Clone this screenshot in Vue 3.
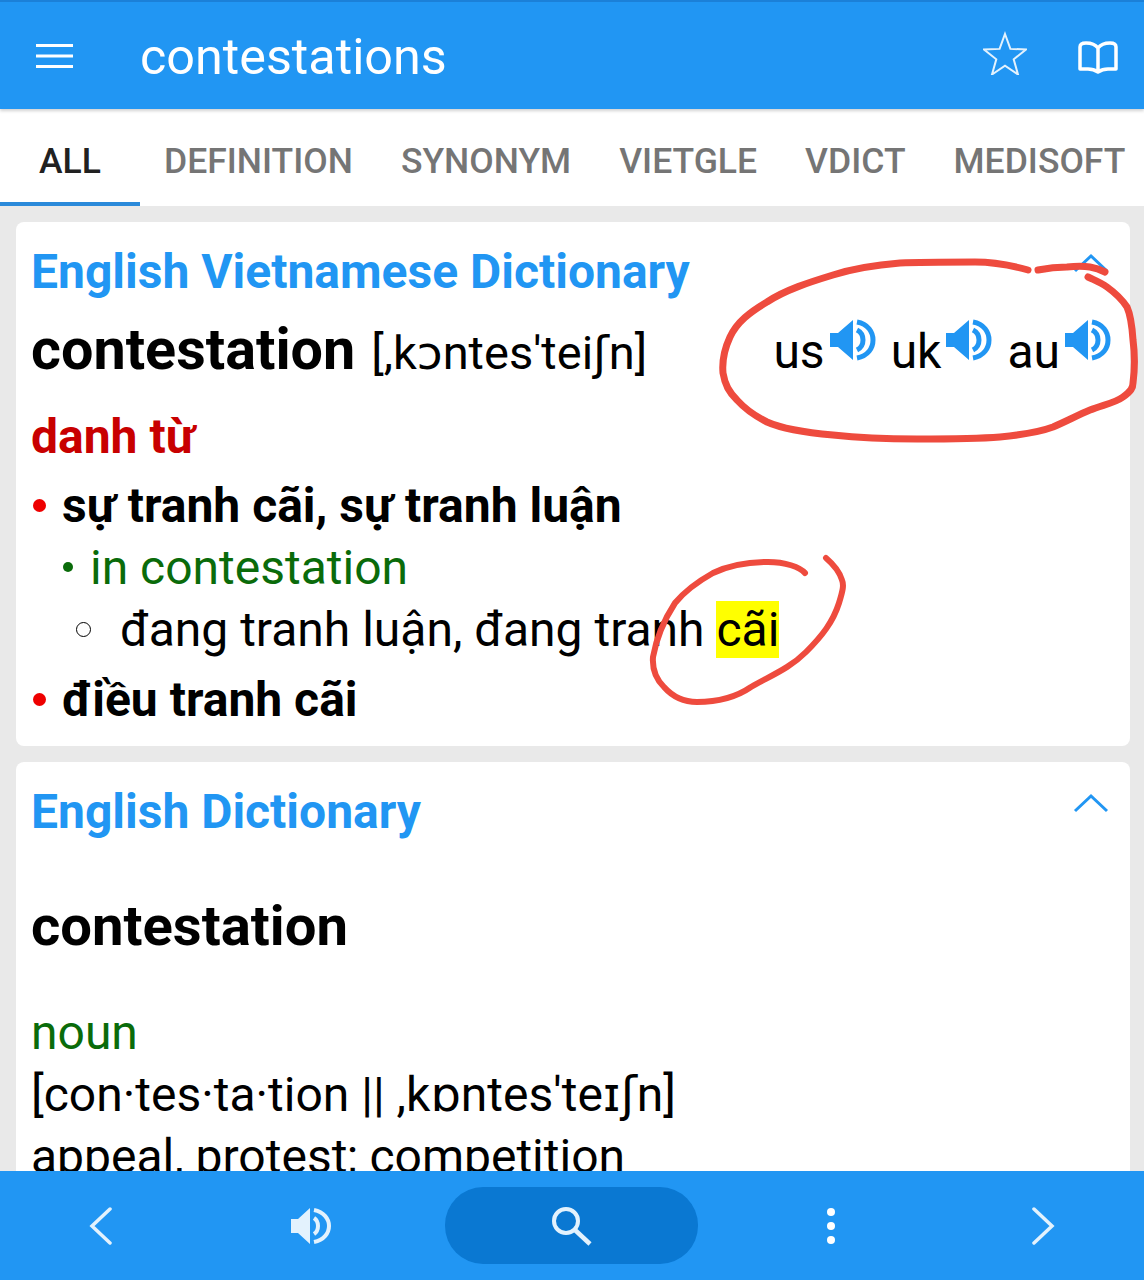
<script setup>
const tabs = ['ALL', 'DEFINITION', 'SYNONYM', 'VIETGLE', 'VDICT', 'MEDISOFT']
const accents = ['us', 'uk', 'au']
</script>

<template>
  <div class="screen">
    <header class="topbar">
      <svg class="menu-icon" width="38" height="26" viewBox="0 0 38 26">
        <path d="M0 2.500H37M0 13H37M0 23.500H37" fill="none" stroke="#fff" stroke-width="3" />
      </svg>
      <div class="query">contestations</div>
      <svg class="star-icon" width="44" height="44" viewBox="0 0 44 44">
        <path d="M22 3l5.400 14.900 15.600.6-12.300 9.800 4.300 15.200L22 34.700 9 43.500l4.300-15.200L1 18.500l15.600-.6z" fill="none" stroke="#e3f2fd" stroke-width="2" />
      </svg>
      <svg class="book-icon" width="40" height="34" viewBox="0 0 40 34">
        <path d="M20 7C17 3 13 2 8 2 4 2 2 3 2 6V28H10C14 28 17 29 20 31 23 29 26 28 30 28H38V6C38 3 36 2 32 2 27 2 23 3 20 7ZM20 7V31" fill="none" stroke="#fff" stroke-width="3.500" stroke-linejoin="round" />
      </svg>
    </header>

    <nav class="tabs">
      <div v-for="(tab, i) in tabs" :key="tab" class="tab" :class="{ active: i === 0 }">{{ tab }}</div>
    </nav>

    <main class="content">
      <section class="card first">
        <div class="card-head">
          <h2>English Vietnamese Dictionary</h2>
          <svg class="fold" width="36" height="20" viewBox="0 0 36 20">
            <path d="M2 18L18 3l16 15" fill="none" stroke="#2196f3" stroke-width="3" />
          </svg>
        </div>
        <div class="word-row">
          <div class="word-left">
            <span class="word">contestation</span>
            <span class="phon">[,kɔntes'teiʃn]</span>
          </div>
          <div class="accents">
            <span v-for="a in accents" :key="a" class="accent">
              {{ a }}
              <svg width="46" height="42" viewBox="0 0 46 42">
                <path d="M0 14H8L23 1V41L8 28H0Z" fill="#2196f3" />
                <path d="M27 11C31 13 33 17 33 21S31 29 27 31M27 3C38 5 43 13 43 21S38 37 27 39" fill="none" stroke="#2196f3" stroke-width="5" />
              </svg>
            </span>
          </div>
        </div>
        <div class="pos">danh từ</div>
        <div class="line bold"><i class="dot red"></i>sự tranh cãi, sự tranh luận</div>
        <div class="line example"><i class="dot green"></i>in contestation</div>
        <div class="line meaning"><i class="ring"></i>đang tranh luận, đang tranh <mark>cãi</mark></div>
        <div class="line bold"><i class="dot red"></i>điều tranh cãi</div>
      </section>

      <section class="card second">
        <div class="card-head">
          <h2>English Dictionary</h2>
          <svg class="fold" width="36" height="20" viewBox="0 0 36 20">
            <path d="M2 18L18 3l16 15" fill="none" stroke="#2196f3" stroke-width="3" />
          </svg>
        </div>
        <div class="word big">contestation</div>
        <div class="line noun">noun</div>
        <div class="line">[con·tes·ta·tion || ,kɒntes'teɪʃn]</div>
        <div class="line">appeal, protest; competition</div>
      </section>
    </main>

    <footer class="bottombar">
      <div class="cell">
        <svg width="24" height="38" viewBox="0 0 24 38">
          <path d="M21 2L3 19l18 17" fill="none" stroke="#e3f2fd" stroke-width="3.500" stroke-linecap="round" />
        </svg>
      </div>
      <div class="cell">
        <svg width="42" height="38" viewBox="0 0 42 38">
          <path d="M0 12H7L19 1V37L7 26H0Z" fill="#e3f2fd" />
          <path d="M23 11C26 13 27 16 27 19S26 25 23 27M23 3C33 5 38 12 38 19S33 33 23 35" fill="none" stroke="#e3f2fd" stroke-width="4" />
        </svg>
      </div>
      <div class="pill">
        <svg width="42" height="40" viewBox="0 0 42 40">
          <circle cx="15" cy="15" r="12" fill="none" stroke="#e3f2fd" stroke-width="4" />
          <path d="M24 24L39 38" fill="none" stroke="#e3f2fd" stroke-width="4.500" />
        </svg>
      </div>
      <div class="cell">
        <svg width="10" height="36" viewBox="0 0 10 36">
          <circle cx="5" cy="4" r="4" fill="#fff" />
          <circle cx="5" cy="18" r="4" fill="#fff" />
          <circle cx="5" cy="32" r="4" fill="#fff" />
        </svg>
      </div>
      <div class="cell">
        <svg width="24" height="38" viewBox="0 0 24 38">
          <path d="M3 2l18 17L3 36" fill="none" stroke="#e3f2fd" stroke-width="3.500" stroke-linecap="round" />
        </svg>
      </div>
    </footer>

    <!-- hand drawn marks over the screenshot -->
    <svg class="marks" width="1144" height="1280" viewBox="0 0 1144 1280">
      <g fill="none" stroke="#ee4b3e" stroke-linecap="round" stroke-linejoin="round">
        <g stroke-width="7">
          <path d="M1028 270C1010 265 995 262 975 262C945 262 920 262 900 263C875 265 855 268 833 275C810 282 785 290 767 302C750 312 737 322 730 337C724 350 722 362 723 373C725 385 729 392 737 400C746 410 755 416 767 422C785 430 810 433 833 435C860 438 890 439 917 439C945 439 975 439 1000 437C1020 435 1037 433 1053 427C1067 421 1078 415 1090 410C1102 405 1115 403 1123 397C1131 391 1133 388 1133 383C1135 368 1135 355 1133 340C1132 325 1131 316 1127 307C1121 298 1114 292 1107 287C1100 282 1094 280 1088 277" />
          <path d="M1038 270C1048 268 1058 267 1067 267C1076 266 1084 266 1090 267C1096 268 1101 270 1105 272" />
        </g>
        <path stroke-width="6" d="M805 573C800 567 785 562 768 562C750 562 730 565 713 573C697 582 684 592 675 603C664 620 656 640 653 657C652 670 657 680 664 687C672 696 684 702 697 702C715 702 735 698 751 687C772 675 790 668 806 652C822 636 833 622 839 603C843 590 844 585 842 580C839 570 833 564 826 558" />
      </g>
    </svg>
  </div>
</template>

<style>
html, body {
  margin: 0;
  background: #e9e9e9;
}
</style>

<style scoped>
.screen {
  position: relative;
  width: 1144px;
  height: 1280px;
  display: flex;
  flex-direction: column;
  overflow: hidden;
  font-family: Roboto, "DejaVu Sans", sans-serif;
  color: #000;
}

.topbar {
  flex: none;
  height: 109px;
  box-sizing: border-box;
  border-top: 2px solid #1b80d8;
  background: #2196f3;
  display: flex;
  align-items: center;
  padding: 0 26px 0 36px;
  box-shadow: 0 2px 3px rgba(0, 0, 0, 0.18);
  position: relative;
  z-index: 2;
}

.menu-icon {
  margin-right: 66px;
}

.query {
  flex: 1;
  color: #fff;
  font-size: 50.300px;
  padding-top: 2px;
}

.star-icon {
  margin-right: 51px;
  margin-bottom: 6px;
}

.book-icon {
  margin-top: 4px;
}

.tabs {
  flex: none;
  height: 97px;
  background: #fff;
  display: flex;
  overflow: hidden;
}

.tab {
  flex: none;
  box-sizing: border-box;
  height: 97px;
  padding: 31px 24px 0;
  font-size: 35.500px;
  font-weight: 500;
  color: #757575;
  white-space: nowrap;
}

.tab.active {
  padding: 31px 0 0 39px;
  width: 140px;
  color: #212121;
  border-bottom: 4px solid #2b8ada;
}

.content {
  flex: 1;
  min-height: 0;
  overflow: hidden;
  background: #e9e9e9;
  padding: 16px 14px 0 16px;
}

.card {
  background: #fff;
  border-radius: 8px;
  padding: 0 16px 0 15px;
}

.first {
  height: 524px;
  box-sizing: border-box;
  margin-bottom: 16px;
}

.second {
  height: 500px;
}

.card-head {
  height: 92px;
  display: flex;
  align-items: center;
  justify-content: space-between;
  padding-top: 6px;
  box-sizing: border-box;
}

.card-head h2 {
  margin: 0;
  color: #2196f3;
  font-size: 48px;
  font-weight: 700;
}

.fold {
  margin-right: 5px;
  margin-bottom: 16px;
}

.word-row {
  height: 66px;
  margin-top: 2px;
  display: flex;
  align-items: center;
  justify-content: space-between;
}

.word-left {
  display: flex;
  align-items: baseline;
  gap: 16px;
}

.word {
  font-size: 57.500px;
  font-weight: 700;
}

.phon {
  font-size: 47px;
}

.accents {
  display: flex;
  gap: 15px;
  margin-right: 3px;
  margin-top: 4px;
}

.accent {
  display: flex;
  gap: 5px;
  font-size: 48px;
}

.accent svg {
  align-self: flex-start;
  margin-top: -4px;
}

.pos {
  margin-top: 24px;
  height: 68px;
  line-height: 62px;
  font-size: 48px;
  font-weight: 700;
  color: #c80000;
}

.line {
  display: flex;
  align-items: center;
  height: 62px;
  font-size: 48px;
  white-space: pre;
}

.line.bold {
  font-weight: 700;
}

.example {
  color: #0a6b0a;
  padding-left: 32px;
}

.meaning {
  padding-left: 45px;
}

.line + .line.bold:last-child {
  height: 78px;
}

.dot {
  flex: none;
  border-radius: 50%;
}

.dot.red {
  width: 13px;
  height: 13px;
  background: #ee0000;
  margin: 0 16px 0 2px;
}

.dot.green {
  width: 10px;
  height: 10px;
  background: #0a6b0a;
  margin-right: 17px;
}

.ring {
  flex: none;
  box-sizing: border-box;
  width: 15px;
  height: 15px;
  border: 1.500px solid #000;
  border-radius: 50%;
  margin-right: 29px;
}

mark {
  background: #ffff00;
  color: inherit;
}

.big {
  display: block;
  margin-top: 39px;
  font-size: 56.200px;
}

.noun {
  margin-top: 42px;
  color: #0a6b0a;
}

.bottombar {
  position: absolute;
  left: 0;
  right: 0;
  bottom: 0;
  height: 109px;
  background: #2196f3;
  display: grid;
  grid-template-columns: 202px 220px 299px 220px 1fr;
  align-items: center;
}

.cell {
  display: flex;
  align-items: center;
  justify-content: center;
}

.pill {
  height: 77px;
  margin: 0 23px;
  border-radius: 38px;
  background: #0a78d2;
  display: flex;
  align-items: center;
  justify-content: center;
}

.marks {
  position: absolute;
  left: 0;
  top: 0;
  pointer-events: none;
  z-index: 3;
}
</style>
